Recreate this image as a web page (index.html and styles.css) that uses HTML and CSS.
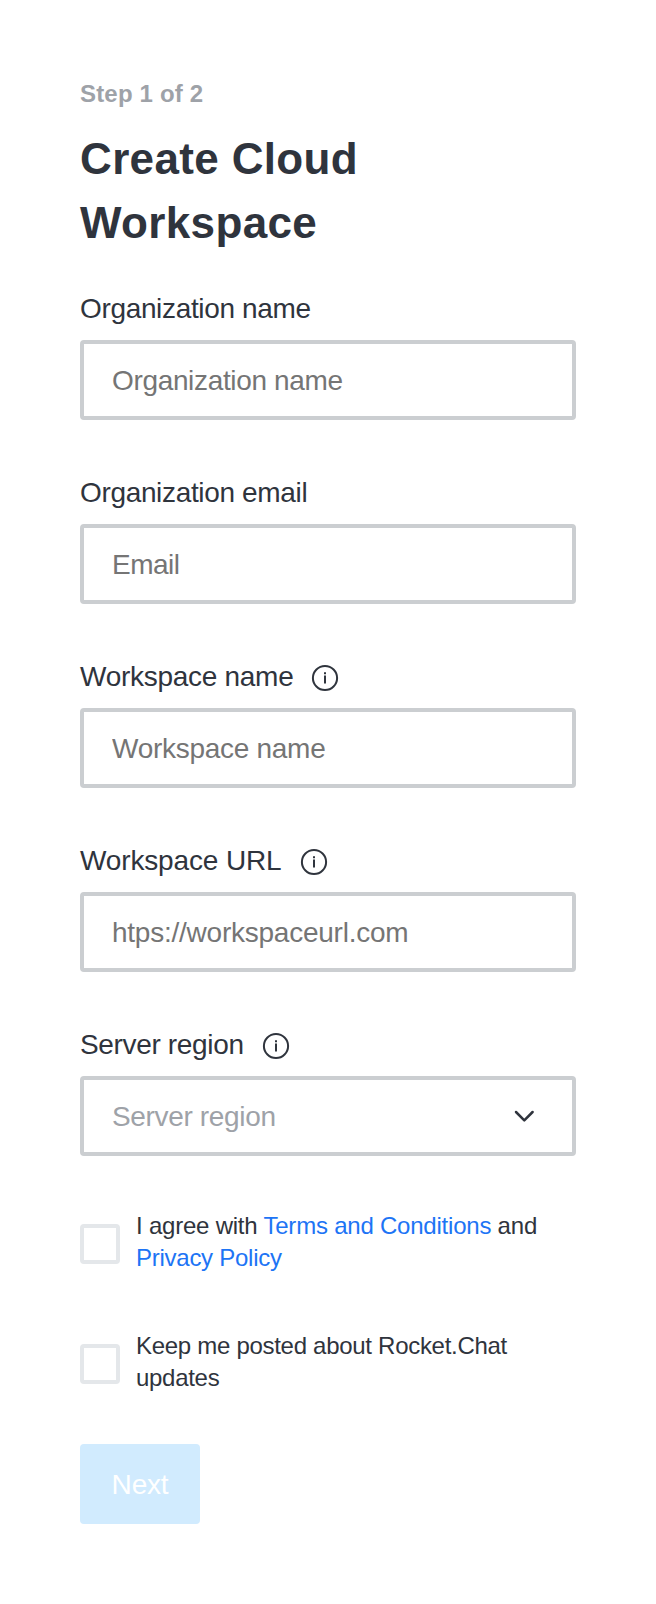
FILE: index.html
```html
<!DOCTYPE html>
<html lang="en">
<head>
<meta charset="utf-8">
<title>Create Cloud Workspace</title>
<link rel="stylesheet" href="styles.css">
</head>
<body>
<form class="form">
  <p class="step">Step 1 of 2</p>
  <h1 class="title">Create Cloud Workspace</h1>
  <div class="field">
    <label class="label" for="org">Organization name</label>
    <input class="input" id="org" placeholder="Organization name">
  </div>
  <div class="field">
    <label class="label" for="email">Organization email</label>
    <input class="input email" id="email" placeholder="Email">
  </div>
  <div class="field workspace">
    <label class="label" for="ws">Workspace name<svg class="info" viewBox="0 0 28 28"><circle cx="14" cy="14" r="12.1"/><path d="M14 11.6V19.6M14 8.3V10.3"/></svg></label>
    <input class="input" id="ws" placeholder="Workspace name">
  </div>
  <div class="field url">
    <label class="label" for="url">Workspace URL<svg class="info" viewBox="0 0 28 28"><circle cx="14" cy="14" r="12.1"/><path d="M14 11.6V19.6M14 8.3V10.3"/></svg></label>
    <input class="input" id="url" placeholder="htps://workspaceurl.com">
  </div>
  <div class="field">
    <label class="label">Server region<svg class="info" viewBox="0 0 28 28"><circle cx="14" cy="14" r="12.1"/><path d="M14 11.6V19.6M14 8.3V10.3"/></svg></label>
    <div class="input select"><span>Server region</span><svg class="chevron" viewBox="0 0 24 24"><path d="M4 8l8.3 8.3L20.600 8"/></svg></div>
  </div>
  <div class="check"><span class="box"></span><p>I agree with <a class="link">Terms and Conditions</a> and<br><a class="link policy">Privacy Policy</a></p></div>
  <div class="check updates"><span class="box"></span><p>Keep me posted about Rocket.Chat<br>updates</p></div>
  <button class="next" type="button">Next</button>
</form>
</body>
</html>
```
FILE: styles.css
```css
* { box-sizing: border-box; }
body { margin: 0; background: #fff; color: #2f343d; font-family: "Liberation Sans", Arial, sans-serif; }
.form { padding: 80px; height: 1604px; }
.step { margin: 0; font-size: 24px; line-height: 28px; font-weight: 700; letter-spacing: .18px; color: #9ea2a8; }
.title { margin: 19px 0 37px; font-size: 44px; line-height: 64px; letter-spacing: .35px; }
.field { height: 184px; letter-spacing: -.34px; }
.workspace { letter-spacing: -.28px; }
.url { letter-spacing: -.24px; }
.url .label { letter-spacing: -.14px; }
.label { display: flex; align-items: center; height: 40px; padding-bottom: 6px; font-size: 28px; }
.info { width: 28px; height: 28px; margin: 2px 0 0 18px; fill: none; stroke: #2f343d; stroke-width: 2; }
.input { display: block; width: 100%; height: 80px; margin-top: 8px; padding: 2px 28px 0; border: 4px solid #cbced1; border-radius: 4px; background: #fff; font: 28px "Liberation Sans", Arial, sans-serif; letter-spacing: inherit; color: #2f343d; }
.input::placeholder { color: #757575; opacity: 1; }
.email { letter-spacing: -.5px; }
.select { display: flex; align-items: center; justify-content: space-between; color: #9ea2a8; }
.chevron { width: 24px; height: 24px; margin: 0 8px 2px 0; fill: none; stroke: #2f343d; stroke-width: 2.5; stroke-linecap: round; stroke-linejoin: round; }
.check { display: flex; align-items: center; gap: 16px; height: 64px; margin-bottom: 56px; font-size: 24px; line-height: 32px; letter-spacing: -.22px; }
.check p { margin: 0; padding-bottom: 4px; white-space: nowrap; }
.check .policy { letter-spacing: -.26px; }
.updates { margin-bottom: 48px; letter-spacing: -.29px; }
.box { width: 40px; height: 40px; flex: none; border: 4px solid #e4e7ea; border-radius: 4px; }
.link { color: #1d74f5; }
.next { display: block; width: 120px; height: 80px; padding: 2px 0 0; border: 0; border-radius: 4px; background: #d1ebfe; color: #fff; font: 28px "Liberation Sans", Arial, sans-serif; letter-spacing: -.2px; }
```
